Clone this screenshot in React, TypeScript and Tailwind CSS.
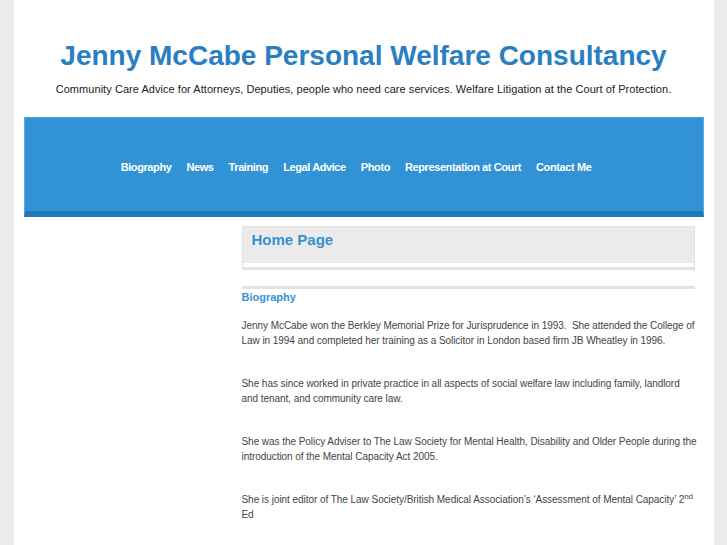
import React from "react";

const navItems = [
  "Biography",
  "News",
  "Training",
  "Legal Advice",
  "Photo",
  "Representation at Court",
  "Contact Me",
];

export default function App() {
  return (
    <div
      className="min-h-[545px] bg-[#ebebeb] flex justify-center"
      style={{ fontFamily: '"Liberation Sans", Arial, sans-serif' }}
    >
      <div className="w-[700px] bg-white min-h-[545px] px-[10px]">
        <header className="pt-[39px] pb-[21px] text-center">
          <h1 className="text-[28px] leading-[34px] font-bold text-[#2a7ec2]">
            Jenny McCabe Personal Welfare Consultancy
          </h1>
          <p className="mt-[9px] text-[11px] leading-[14px] text-[#222] tracking-[0.05px]">
            Community Care Advice for Attorneys, Deputies, people who need care services. Welfare Litigation at the Court of Protection.
          </p>
        </header>
        <nav className="h-[100px] pt-[6px] pr-[15px] bg-[#3192d5] border border-[#5aa8e0] border-b-[6px] border-b-[#2179b9] flex items-center justify-center gap-[15px]">
          {navItems.map((n) => (
            <span key={n} className="text-white text-[11px] font-bold tracking-[-0.4px]">
              {n}
            </span>
          ))}
        </nav>
        <div className="flex">
          <aside className="w-[218px] shrink-0" />
          <main className="w-[453px] pt-[9px]">
            <div className="border border-[#e0e0e0] bg-white">
              <div className="bg-[#ebebeb] h-[36px] px-[9px] pt-[4px]">
                <h2 className="text-[15px] leading-[18px] font-bold text-[#3592d4]">Home Page</h2>
              </div>
              <div className="h-[6px] bg-white border-b-2 border-[#e4e4e4]" />
            </div>
            <div className="mt-[16px] h-[3px] bg-[#e2e2e2]" />
            <h3 className="mt-[1px] text-[11px] leading-[14px] font-bold text-[#3592d4]">Biography</h3>
            <div className="mt-[15px] mr-[-4px] text-[10px] leading-[14.5px] text-[#444] tracking-[-0.05px]">
              <p className="mb-[29px]">
                Jenny McCabe won the Berkley Memorial Prize for Jurisprudence in 1993.&nbsp; She attended the College of Law in 1994 and completed her training as a Solicitor in London based firm JB Wheatley in 1996.
              </p>
              <p className="mb-[29px]">
                She has since worked in private practice in all aspects of social welfare law including family, landlord and tenant, and community care law.
              </p>
              <p className="mb-[29px]">
                She was the Policy Adviser to The Law Society for Mental Health, Disability and Older People during the introduction of the Mental Capacity Act 2005.
              </p>
              <p>
                She is joint editor of The Law Society/British Medical Association’s ‘Assessment of Mental Capacity’ 2<sup className="text-[8px]">nd</sup> Ed
              </p>
            </div>
          </main>
        </div>
      </div>
    </div>
  );
}
